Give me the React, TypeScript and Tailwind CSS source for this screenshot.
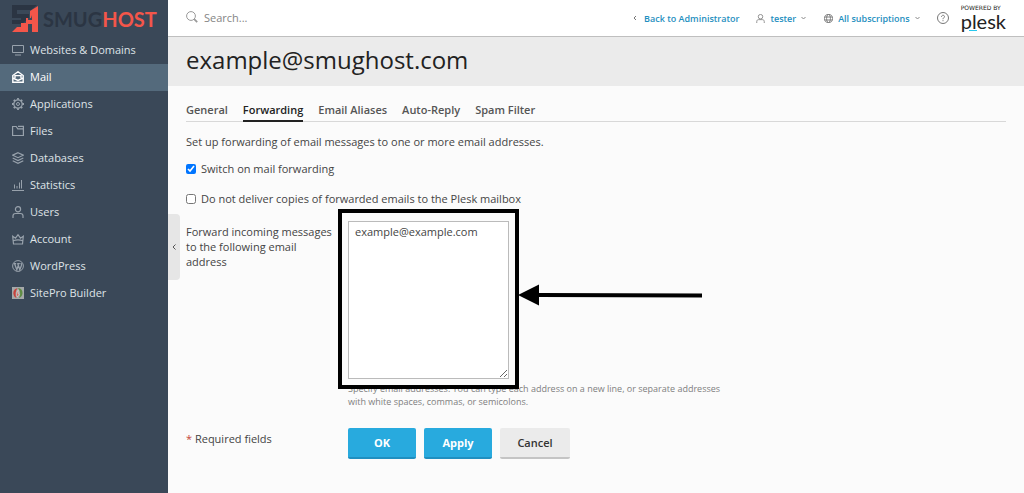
import type { ReactNode } from "react";
import { clsx } from "clsx";

const navItems: { label: string; icon: ReactNode }[] = [
  {
    label: "Websites & Domains",
    icon: <path d="M.5 1.5h11v7H.5zM3 11h6" />,
  },
  {
    label: "Mail",
    icon: <path d="M.8 4.5 6 .8l5.2 3.7v6.7H.8zM.8 7 6 9.4 11.2 7M3 7V4.6h6V7" strokeWidth="1.4" />,
  },
  {
    label: "Applications",
    icon: (
      <>
        <circle cx="6" cy="6" r="4.2" strokeWidth="1.2" />
        <circle cx="6" cy="6" r="1.5" />
        <path d="M6 0v1.8M6 10.2V12M0 6h1.8M10.2 6H12M1.8 1.8 3 3M9 9l1.2 1.2M10.2 1.8 9 3M3 9l-1.2 1.2" strokeWidth="1.8" />
      </>
    ),
  },
  {
    label: "Files",
    icon: <path d="M.6 1.5h3.6l1.6 2.3h5.6v6.7H.6zM6 1.4h5.4v2.4" strokeWidth="1.2" />,
  },
  {
    label: "Databases",
    icon: <path d="M6 .7 11.3 3.2 6 5.7.7 3.2zM.7 6 6 8.5 11.3 6M.7 8.8 6 11.3l5.3-2.5" strokeWidth="1.2" />,
  },
  {
    label: "Statistics",
    icon: <path d="M0 11.5h12M2.5 5.5v4M5 7v2.5M7.5 3.5v6M9.5 1v8.5" />,
  },
  {
    label: "Users",
    icon: (
      <>
        <circle cx="6" cy="3.2" r="2.6" strokeWidth="1.2" />
        <path d="M1 12V9.8C1 8.3 2 7.5 3.5 7.5h5C10 7.5 11 8.3 11 9.8V12" strokeWidth="1.2" />
      </>
    ),
  },
  {
    label: "Account",
    icon: <path d="M1.5 11 .7 3.200l2.800 2L6 1.700l2.500 3.500 2.800-2-.8 7.800zM1.200 7.800Q6 6 10.800 7.800" strokeWidth="1.200" />,
  },
  {
    label: "WordPress",
    icon: (
      <>
        <circle cx="6" cy="6" r="5.4" />
        <path d="M1.8 3.6h2.4M5.2 3.6h2.6M2.6 3.8l2.2 6L6.3 5.4M5.8 3.8l2 6 1.7-4.6c.3-.9-.4-1.4-.5-2.2" strokeWidth="1.3" />
      </>
    ),
  },
  {
    label: "SitePro Builder",
    icon: (
      <>
        <path d="M0 0h12v12H0z" fill="#a5a9a9" stroke="none" />
        <path d="M5.6 1C2.2 1.8 1 4.5 1.5 7.3 1.9 9.3 3 10.6 4.6 11 2.8 7.5 3.6 4 5.6 1z" fill="#c8433c" stroke="none" />
        <path d="M6 1c3.4.3 4.8 2.8 4.5 5.6C10.2 9.2 8.6 10.8 6.8 11 9 7.8 8.4 4 6 1z" fill="#5f8d43" stroke="none" />
        <path d="M6.2 3.2C4.6 5.4 4.5 7.6 5.4 9.8L7.3 7.4 6 7z" fill="#c8433c" stroke="#e8e0d8" strokeWidth=".6" />
      </>
    ),
  },
];

const tabs = ["General", "Forwarding", "Email Aliases", "Auto-Reply", "Spam Filter"];

function Icon({ children, className }: { children: ReactNode; className?: string }) {
  return (
    <svg viewBox="0 0 12 12" fill="none" stroke="currentColor" className={clsx("size-3 shrink-0", className)} aria-hidden="true">
      {children}
    </svg>
  );
}

function ChevronDown() {
  return (
    <svg viewBox="0 0 5 4" fill="none" stroke="#888" className="h-1 w-[5px]" aria-hidden="true">
      <path d="M.5 1 2.5 3l2-2" />
    </svg>
  );
}

function Sidebar() {
  return (
    <aside className="w-[168px] shrink-0 bg-[#3a4858]">
      <a href="#" className="flex h-[37px] items-center gap-1 pl-3">
        <svg viewBox="0 0 27 27" className="size-[27px] shrink-0" aria-hidden="true">
          <path d="M0 0h25l-6 5H5v4h12v4l-7 6H0v-4h9v-2H0z" fill="#2b3543" />
          <path d="M26 1v26h-6v-8h-4v8H0l5-5h4v-4h5v-5h4V6z" fill="#f4564a" />
          <path d="M20 10v5h-4v-2h3z" fill="#3a4858" />
        </svg>
        <span className="font-['Lato'] text-[20px] leading-5 font-bold text-[#2b3543]">
          SMUG<span className="text-[#f4564a]">HOST</span>
        </span>
      </a>
      <nav>
        {navItems.map(({ label, icon }) => (
          <a
            key={label}
            href="#"
            className={clsx(
              "flex h-[27px] items-center gap-1.5 pb-0.5 pl-3",
              label === "Mail" ? "bg-[#546a7c] text-white" : "text-[#dfe3e7]"
            )}
          >
            <Icon className={label === "Mail" ? "text-white" : "text-[#98a2ac]"}>{icon}</Icon>
            {label}
          </a>
        ))}
      </nav>
    </aside>
  );
}

function Header() {
  return (
    <header className="flex h-[37px] items-center border-b border-[#bfbfbf] bg-white px-[18px]">
      <label className="flex flex-1 items-center gap-1.5 pb-0.5">
        <Icon className="text-[#999]">
          <circle cx="5" cy="5" r="4.4" />
          <path d="m8.2 8.2 3 3" strokeWidth="1.8" />
        </Icon>
        <input type="search" aria-label="Search" placeholder="Search..." className="w-40 bg-transparent outline-none placeholder:text-[#858585]" />
      </label>
      <div className="flex items-center text-[9px] font-semibold text-[#1f8fc0]">
        <a href="#" className="flex items-center gap-[7px]">
          <svg viewBox="0 0 4 6" fill="none" stroke="#777" className="h-1.5 w-1" aria-hidden="true">
            <path d="M3 1 1 3l2 2" />
          </svg>
          Back to Administrator
        </a>
        <button type="button" className="ml-[17px] flex items-center gap-[5px]">
          <svg viewBox="0 0 12 12" fill="none" stroke="#888" strokeWidth="1.2" className="size-[9px]" aria-hidden="true">
            <circle cx="6" cy="3.6" r="3" />
            <path d="M1 12v-2c0-1.500 1-2.500 2.500-2.500h5C10 7.500 11 8.500 11 10v2" />
          </svg>
          tester
          <ChevronDown />
        </button>
        <button type="button" className="ml-[18px] flex items-center gap-[5px]">
          <svg viewBox="0 0 12 12" fill="none" stroke="#777" strokeWidth="1.2" className="size-[9px]" aria-hidden="true">
            <circle cx="6" cy="6" r="5.400" />
            <ellipse cx="6" cy="6" rx="2.600" ry="5.400" />
            <path d="M1 4h10M1 8h10" />
          </svg>
          All subscriptions
          <ChevronDown />
        </button>
        <button type="button" aria-label="Help" className="ml-[17px]">
          <Icon className="text-[#777]">
            <circle cx="6" cy="6" r="5.500" />
            <path d="M4.500 4.800c0-2 3-2 3-.2C7.500 5.700 6 5.800 6 7.200M6 8.200v1" />
          </Icon>
        </button>
      </div>
      <a href="#" className="ml-3 flex flex-col text-[#222]">
        <span className="font-['DejaVu_Sans'] text-[6px] leading-[6px]">POWERED BY</span>
        <span className="relative font-['Lato'] text-[20px] leading-5">
          plesk
          <span className="absolute bottom-0 left-2 h-px w-2 bg-[#28c8ee]" />
        </span>
      </a>
    </header>
  );
}

// Frame round the address field with an arrow pointing at it
function Callout() {
  return (
    <>
      <div className="pointer-events-none absolute -inset-x-2.5 -top-3 -bottom-2.5 border-4 border-black" />
      <svg viewBox="0 0 184 22" className="pointer-events-none absolute top-[63px] left-[170px] h-[22px] w-[184px]" aria-hidden="true">
        <path d="M0 11 21 .5v8.500l163 .5v4l-163-.5v8.500z" />
      </svg>
    </>
  );
}

export default function App() {
  return (
    <div className="flex min-h-screen bg-[#fbfbfb] font-['Open_Sans',sans-serif] text-[11px] leading-[15px] text-[#444]">
      <Sidebar />
      <div className="relative min-w-0 flex-1">
        <Header />
        <div className="h-[49px] bg-[#ebebeb] px-[18px]">
          <h1 className="text-2xl leading-[46px] text-[#222]">example@smughost.com</h1>
        </div>

        {/* Sidebar toggle */}
        <button
          type="button"
          aria-label="Collapse sidebar"
          className="absolute top-[214px] left-0 flex h-[66px] w-3 items-center justify-center rounded-r-sm bg-[#e6e6e6]"
        >
          <svg viewBox="0 0 4 6" fill="none" stroke="#555" className="h-1.5 w-1" aria-hidden="true">
            <path d="M3.500.5 1 3l2.500 2.500" />
          </svg>
        </button>

        <main className="px-[18px] pt-4">
          <nav className="flex gap-[15px] border-b border-[#d8d8d8] font-semibold text-[#555]">
            {tabs.map((tab) => (
              <a
                key={tab}
                href="#"
                className={clsx("-mb-px border-b-2 pb-[3px]", tab === "Forwarding" ? "border-[#222] text-[#222]" : "border-transparent")}
              >
                {tab}
              </a>
            ))}
          </nav>

          <form onSubmit={(e) => e.preventDefault()}>
            <p className="mt-3">Set up forwarding of email messages to one or more email addresses.</p>
            <label className="mt-3 flex items-center gap-[5px]">
              <input type="checkbox" defaultChecked className="size-[10px] accent-[#0075ff]" />
              Switch on mail forwarding
            </label>
            <label className="mt-[15px] flex items-center gap-[5px]">
              <input type="checkbox" className="size-[10px] accent-[#0075ff]" />
              Do not deliver copies of forwarded emails to the Plesk mailbox
            </label>

            <div className="mt-[15px] flex">
              <label htmlFor="addresses" className="w-[162px] shrink-0 pt-[3px] pr-4">
                Forward incoming messages to the following email address
              </label>
              <div>
                <div className="relative w-[161px]">
                  <textarea
                    id="addresses"
                    defaultValue="example@example.com"
                    className="block h-[158px] w-full border border-[#bbb] bg-white px-1.5 py-0.5 outline-none"
                  />
                  <Callout />
                </div>
                <p className="mt-[3px] max-w-[380px] text-[9px] leading-[13px] text-[#808080]">
                  Specify email addresses. You can type each address on a new line, or separate addresses with white spaces, commas, or semicolons.
                </p>
              </div>
            </div>

            <div className="mt-5 flex">
              <p className="w-[162px] shrink-0 pt-[3px]">
                <span className="text-[#c4473a]">*</span> Required fields
              </p>
              <div className="flex gap-2 font-bold">
                <button type="submit" className="h-[31px] w-[68px] rounded-xs border-b-2 border-[#1f8fc0] bg-[#28aade] text-white">
                  OK
                </button>
                <button type="button" className="h-[31px] w-[68px] rounded-xs border-b-2 border-[#1f8fc0] bg-[#28aade] text-white">
                  Apply
                </button>
                <button type="button" className="h-[31px] w-[70px] rounded-xs border-b-2 border-[#c4c4c4] bg-[#ebebeb] font-semibold text-[#333]">
                  Cancel
                </button>
              </div>
            </div>
          </form>
        </main>
      </div>
    </div>
  );
}
